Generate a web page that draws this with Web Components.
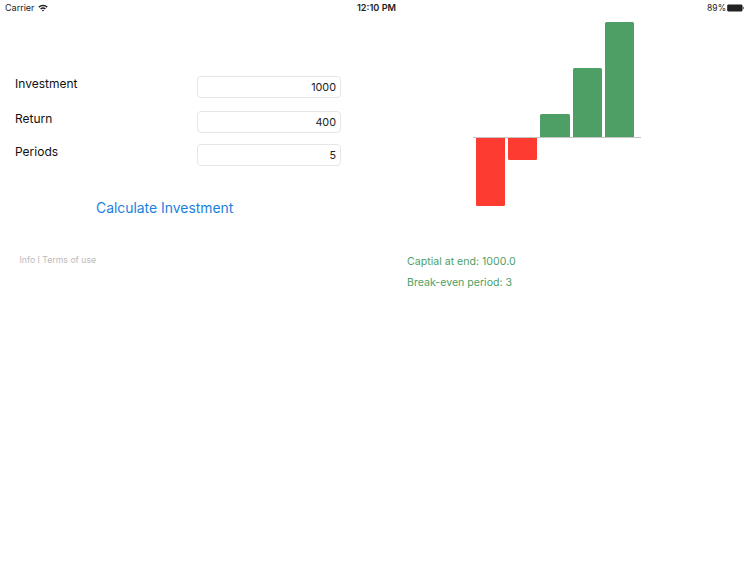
<!DOCTYPE html>
<html>
<head>
<meta charset="utf-8">
<style>
  html, body { margin: 0; background: #fff; }
  body { font-family: Inter, "Noto Sans", sans-serif; width: 750px; height: 563px; overflow: hidden; }
  .columns { display: grid; grid-template-columns: 375px 375px; }
</style>
</head>
<body>
<status-bar></status-bar>
<div class="columns">
  <invest-form>
    <form-row label="Investment" style="--gap:12.5px">1000</form-row>
    <form-row label="Return" style="--gap:11px">400</form-row>
    <form-row label="Periods">5</form-row>
  </invest-form>
  <result-panel>
    <bar-chart></bar-chart>
    <span slot="line">Captial at end: 1000.0</span>
    <span slot="line">Break-even period: 3</span>
  </result-panel>
</div>

<script>
class StatusBar extends HTMLElement {
  connectedCallback() {
    this.attachShadow({ mode: 'open' });
    this.shadowRoot.innerHTML = `
      <style>
        :host { display: grid; grid-template-columns: 1fr auto 1fr; align-items: center; height: 15px; padding: 0 5px; font-size: 9px; color: #222; }
        .left { display: flex; align-items: center; gap: 3px; }
        .right { display: flex; align-items: center; justify-content: flex-end; gap: 1px; font-size: 8.5px; }
        .time { font-size: 9.2px; font-weight: 600; margin-left: 3px; }
        svg { display: block; }
      </style>
      <div class="left">Carrier
        <svg width="10" height="8" viewBox="0 0 10 8"><path d="M0.3 2.6A7 7 0 0 1 9.7 2.6L8.7 3.7A5.5 5.5 0 0 0 1.3 3.7ZM2.1 4.5A4.4 4.4 0 0 1 7.9 4.5L6.9 5.5A3 3 0 0 0 3.1 5.5ZM3.8 6.3A1.8 1.8 0 0 1 6.2 6.3L5 7.6Z" fill="#222"/></svg>
      </div>
      <div class="time">12:10 PM</div>
      <div class="right">89%
        <svg width="18" height="8" viewBox="0 0 18 8"><rect x="0.3" y="0.8" width="15" height="6.4" rx="1.2" fill="#222" stroke="#222" stroke-width="0.5"/><path d="M16 2.8C17 3 17 5 16 5.2Z" fill="#222"/></svg>
      </div>`;
  }
}

class InvestForm extends HTMLElement {
  connectedCallback() {
    this.attachShadow({ mode: 'open' });
    this.shadowRoot.innerHTML = `
      <style>
        :host { display: block; padding: 61px 34px 0 15px; }
        .rows { display: flex; flex-direction: column; }
        .calc { margin: 32px 0 0 81px; font-size: 13.9px; color: #1a7fe0; line-height: 20px; }
        .links { margin: 36px 0 0 4.5px; font-size: 8.7px; color: #bbb; line-height: 12px; }
      </style>
      <div class="rows"><slot></slot></div>
      <div class="calc">Calculate Investment</div>
      <div class="links">Info I Terms of use</div>`;
  }
}

class FormRow extends HTMLElement {
  connectedCallback() {
    const value = this.textContent;
    this.textContent = '';
    this.attachShadow({ mode: 'open' });
    this.shadowRoot.innerHTML = `
      <style>
        :host { display: flex; justify-content: space-between; align-items: flex-start; margin-bottom: var(--gap, 0); }
        .label { font-size: 12px; line-height: 16px; color: #111; }
        .field { box-sizing: border-box; width: 144px; height: 22px; border: 1px solid #e6e6e6; border-radius: 4px; padding: 0 4px; font-size: 10.8px; line-height: 21px; color: #222; text-align: right; }
      </style>
      <div class="label">${this.getAttribute('label')}</div>
      <div class="field">${value}</div>`;
  }
}

class BarChart extends HTMLElement {
  connectedCallback() {
    // value is bar height in px, negative goes below the axis
    const bars = [-68, -22, 23, 69, 115];
    const up = bars.map(v => `<div class="slot">${v > 0 ? `<div class="bar pos" style="height:${v}px"></div>` : ''}</div>`);
    const down = bars.map(v => `<div class="slot">${v < 0 ? `<div class="bar neg" style="height:${-v}px"></div>` : ''}</div>`);
    this.attachShadow({ mode: 'open' });
    this.shadowRoot.innerHTML = `
      <style>
        :host { display: block; width: 168px; margin-left: 98px; }
        .plot { display: flex; gap: 3px; padding: 0 7px 0 3px; }
        .top { height: 115px; align-items: flex-end; }
        .bottom { height: 69px; align-items: flex-start; }
        .slot { width: 29.4px; }
        .axis { height: 1px; background: #c4c4c4; }
        .bar { width: 100%; border-radius: 1.5px 1.5px 0 0; }
        .pos { background: #4e9f66; }
        .neg { background: #fe3b30; border-radius: 0 0 1.5px 1.5px; }
      </style>
      <div class="plot top">${up.join('')}</div>
      <div class="axis"></div>
      <div class="plot bottom">${down.join('')}</div>`;
  }
}

class ResultPanel extends HTMLElement {
  connectedCallback() {
    this.attachShadow({ mode: 'open' });
    this.shadowRoot.innerHTML = `
      <style>
        :host { display: block; padding-top: 7px; }
        .lines { display: flex; flex-direction: column; gap: 7px; margin: 48px 0 0 32px; font-size: 10.6px; line-height: 14px; color: #4e9f66; }
      </style>
      <slot></slot>
      <div class="lines"><slot name="line"></slot></div>`;
  }
}

customElements.define('status-bar', StatusBar);
customElements.define('invest-form', InvestForm);
customElements.define('form-row', FormRow);
customElements.define('bar-chart', BarChart);
customElements.define('result-panel', ResultPanel);
</script>
</body>
</html>
